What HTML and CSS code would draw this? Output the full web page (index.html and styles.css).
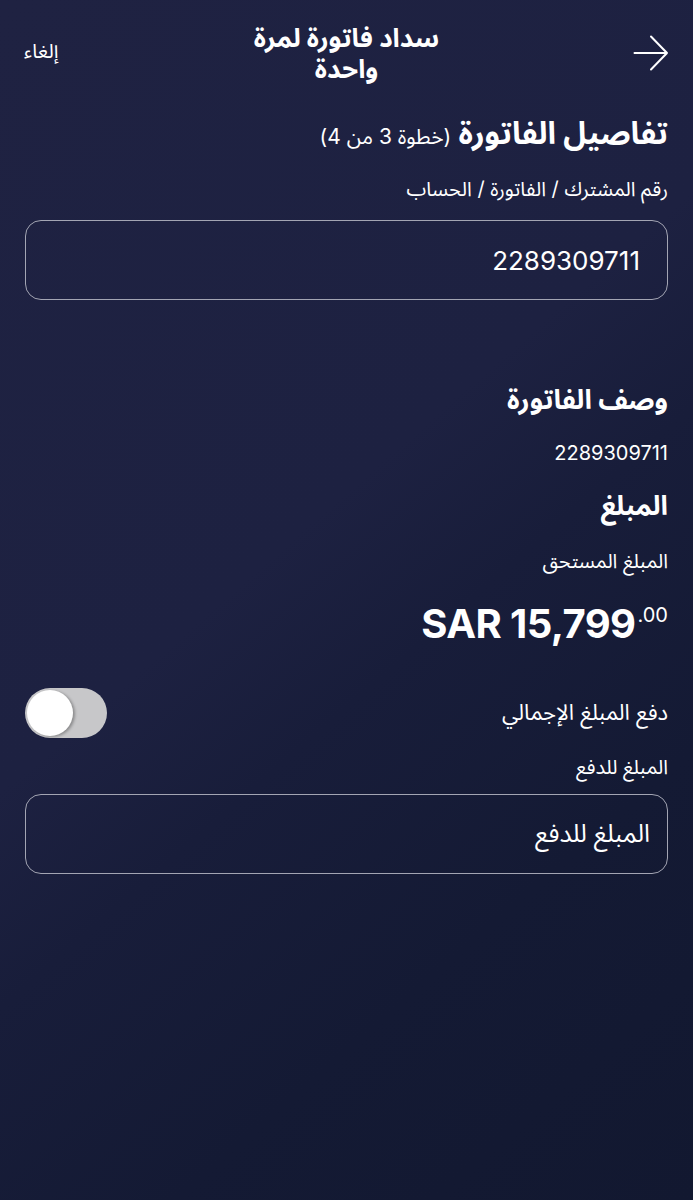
FILE: index.html
```html
<!DOCTYPE html>
<html lang="ar" dir="rtl">
<head>
<meta charset="utf-8">
<link rel="stylesheet" href="styles.css">
</head>
<body>
<div class="screen">
  <header class="topbar">
    <button class="back" aria-label="رجوع">
      <svg width="36" height="36" viewBox="0 0 36 36"><path d="M1.5 18H34M18 1.5L34 18L18 34.5" fill="none" stroke="#fff" stroke-width="2" stroke-linecap="round" stroke-linejoin="round"/></svg>
    </button>
    <h1 class="title">سداد فاتورة لمرة واحدة</h1>
    <button class="cancel">إلغاء</button>
  </header>

  <main class="content">
    <h2 class="step-title">تفاصيل الفاتورة <span class="step">(خطوة 3 من 4)</span></h2>
    <label class="label first">رقم المشترك / الفاتورة / الحساب</label>
    <div class="field first-field"><span class="field-value">2289309711</span></div>

    <h3 class="section desc">وصف الفاتورة</h3>
    <p class="value">2289309711</p>

    <h3 class="section amount-h">المبلغ</h3>
    <p class="label due">المبلغ المستحق</p>
    <div class="amount" dir="ltr"><span class="amt-main">SAR 15,799</span><span class="amt-dec">.00</span></div>

    <div class="toggle-row">
      <span class="toggle-label">دفع المبلغ الإجمالي</span>
      <span class="switch"><span class="knob"></span></span>
    </div>
    <label class="label pay">المبلغ للدفع</label>
    <div class="field pay-field"><span class="field-placeholder">المبلغ للدفع</span></div>
  </main>
</div>
</body>
</html>
```

FILE: styles.css
```css
* { box-sizing: border-box; }
html, body { margin: 0; padding: 0; }
body {
  width: 693px;
  height: 1200px;
  overflow: hidden;
  font-family: Inter, "Noto Sans Arabic", "DejaVu Sans", sans-serif;
  color: #ffffff;
  background: linear-gradient(139deg, #1f2242 0%, #1d2141 44%, #181d3a 56%, #141a34 75%, #121830 100%);
}
.screen { height: 1200px; }
.topbar {
  display: flex;
  align-items: center;
  justify-content: space-between;
  padding: 21px 24px 0 24px;
  height: 84px;
}
.back, .cancel {
  background: none;
  border: none;
  padding: 0;
  color: #fff;
  font-family: inherit;
  cursor: pointer;
  width: 60px;
}
.back { height: 36px; display: flex; justify-content: flex-start; }
.cancel { font-size: 20px; text-align: left; margin-top: -2px; }
.title {
  margin: 0;
  width: 230px;
  text-align: center;
  font-size: 26px;
  font-weight: 700;
  line-height: 31px;
}
.content { padding: 0 25px 0 25px; }
.step-title {
  margin: 29px 0 0 0;
  font-size: 31px;
  font-weight: 700;
  line-height: 40px;
}
.step { font-size: 21px; font-weight: 400; }
.label { display: block; font-size: 20px; line-height: 28px; margin: 0; }
.label.first { margin-top: 18px; }
.field {
  height: 80px;
  border: 1.5px solid #a3a5b3;
  border-radius: 16px;
  display: flex;
  align-items: center;
  padding: 0 27px;
}
.first-field { margin-top: 17px; }
.field-value { font-size: 26px; }
.field-placeholder { font-size: 25px; margin-right: -10px; }
.section { margin: 0; font-size: 27px; font-weight: 700; line-height: 36px; }
.section.desc { margin-top: 82px; }
.value { margin: 22px 0 0 0; font-size: 20px; line-height: 26px; }
.section.amount-h { margin-top: 22px; }
.label.due { margin-top: 23px; }
.amount {
  margin-top: 25px;
  display: flex;
  justify-content: flex-end;
  align-items: flex-start;
  line-height: 48px;
}
.amt-main { font-size: 40px; font-weight: 700; letter-spacing: -0.6px; }
.amt-dec { font-size: 20px; line-height: 24px; margin-top: 3px; margin-left: 2px; }
.toggle-row {
  margin-top: 40px;
  display: flex;
  align-items: center;
  justify-content: space-between;
}
.toggle-label { font-size: 22px; }
.switch {
  width: 82px;
  height: 50px;
  border-radius: 25px;
  background: #c7c7c9;
  display: flex;
  align-items: center;
  justify-content: flex-end;
  padding: 2px;
}
.knob {
  width: 46px;
  height: 46px;
  border-radius: 50%;
  background: #fff;
  box-shadow: 2px 1px 3px rgba(0,0,0,0.3);
}
.label.pay { margin-top: 15px; }
.pay-field { margin-top: 13px; }
```
